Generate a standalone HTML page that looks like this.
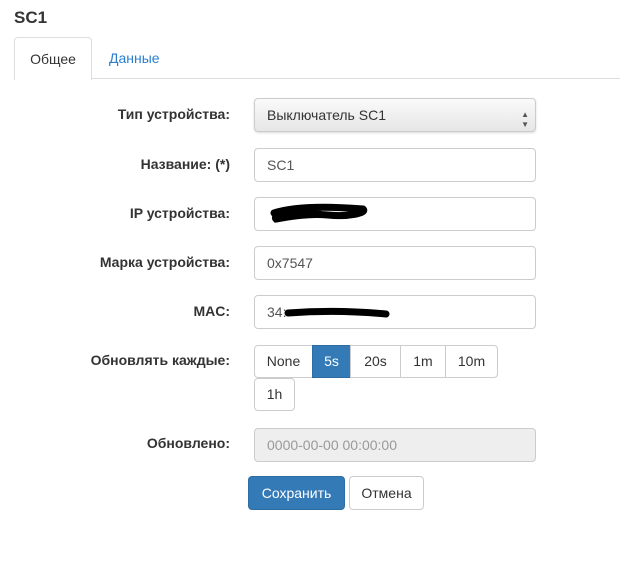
<!DOCTYPE html><html><head><meta charset="utf-8"><style>
body{margin:0;width:620px;height:566px;background:#fff;font-family:"Liberation Sans",sans-serif;font-size:14px;color:#333;position:relative;overflow:hidden}
.a{position:absolute}
.lbl{position:absolute;right:390px;font-weight:bold;font-size:14px;text-align:right;white-space:nowrap}
.in{position:absolute;left:254px;height:32px;border:1px solid #ccc;border-radius:4px;box-sizing:content-box;line-height:32px;padding-left:12px;width:268px;color:#555}
.b{position:absolute;line-height:31px;border:1px solid #ccc;text-align:center;color:#333;box-sizing:border-box;height:33px}
</style></head><body>
<div class="a" style="left:14px;top:8px;font-size:17px;font-weight:bold">SC1</div>
<div class="a" style="left:14px;top:37px;width:76px;height:42px;border:1px solid #ddd;border-bottom:none;border-radius:4px 4px 0 0;background:#fff;z-index:2;text-align:center;line-height:42px">Общее</div>
<div class="a" style="left:14px;top:78px;width:606px;height:1px;background:#ddd"></div>
<div class="a" style="left:109px;top:37px;line-height:42px;color:#2a7fcf">Данные</div>

<div class="lbl" style="top:106px">Тип устройства:</div>
<div class="in" style="top:98px;background:linear-gradient(#fafafa,#e6e6e6);box-shadow:0 1px 2px rgba(0,0,0,.15);color:#333;border-color:#ccc">Выключатель SC1<span class="a" style="right:6px;font-size:8px;line-height:10px;top:11px;color:#555">▲<br>▼</span></div>

<div class="lbl" style="top:156px">Название: (*)</div>
<div class="in" style="top:148px">SC1</div>
<div class="lbl" style="top:205px">IP устройства:</div>
<div class="in" style="top:197px"></div>
<svg class="a" style="left:268px;top:203px" width="102" height="22"><path d="M6 10 C30 2,70 4,95 6 C100 10,80 14,60 12 C40 10,20 14,8 16 C4 12,20 8,50 9" stroke="#000" stroke-width="7" fill="none" stroke-linecap="round"/></svg>
<div class="lbl" style="top:254px">Марка устройства:</div>
<div class="in" style="top:246px">0x7547</div>
<div class="lbl" style="top:303px">MAC:</div>
<div class="in" style="top:295px">34:</div>
<svg class="a" style="left:284px;top:304px" width="110" height="18"><path d="M4 9 C30 7,60 6,102 10" stroke="#000" stroke-width="7" fill="none" stroke-linecap="round"/></svg>

<div class="lbl" style="top:352px">Обновлять каждые:</div>
<div class="b" style="left:254px;top:345px;width:59px;border-radius:4px 0 0 4px">None</div>
<div class="b" style="left:312px;top:345px;width:39px;background:#337ab7;border-color:#2e6da4;color:#fff">5s</div>
<div class="b" style="left:350px;top:345px;width:51px">20s</div>
<div class="b" style="left:400px;top:345px;width:46px">1m</div>
<div class="b" style="left:445px;top:345px;width:53px;border-radius:0 4px 4px 0">10m</div>
<div class="b" style="left:254px;top:378px;width:41px;border-radius:4px">1h</div>

<div class="lbl" style="top:435px">Обновлено:</div>
<div class="in" style="top:428px;background:#eee;color:#999">0000-00-00 00:00:00</div>

<div class="b" style="left:248px;top:476px;width:97px;height:34px;line-height:32px;background:#337ab7;border-color:#2e6da4;color:#fff;border-radius:4px">Сохранить</div>
<div class="b" style="left:349px;top:476px;width:75px;height:34px;line-height:32px;border-radius:4px">Отмена</div>
</body></html>
